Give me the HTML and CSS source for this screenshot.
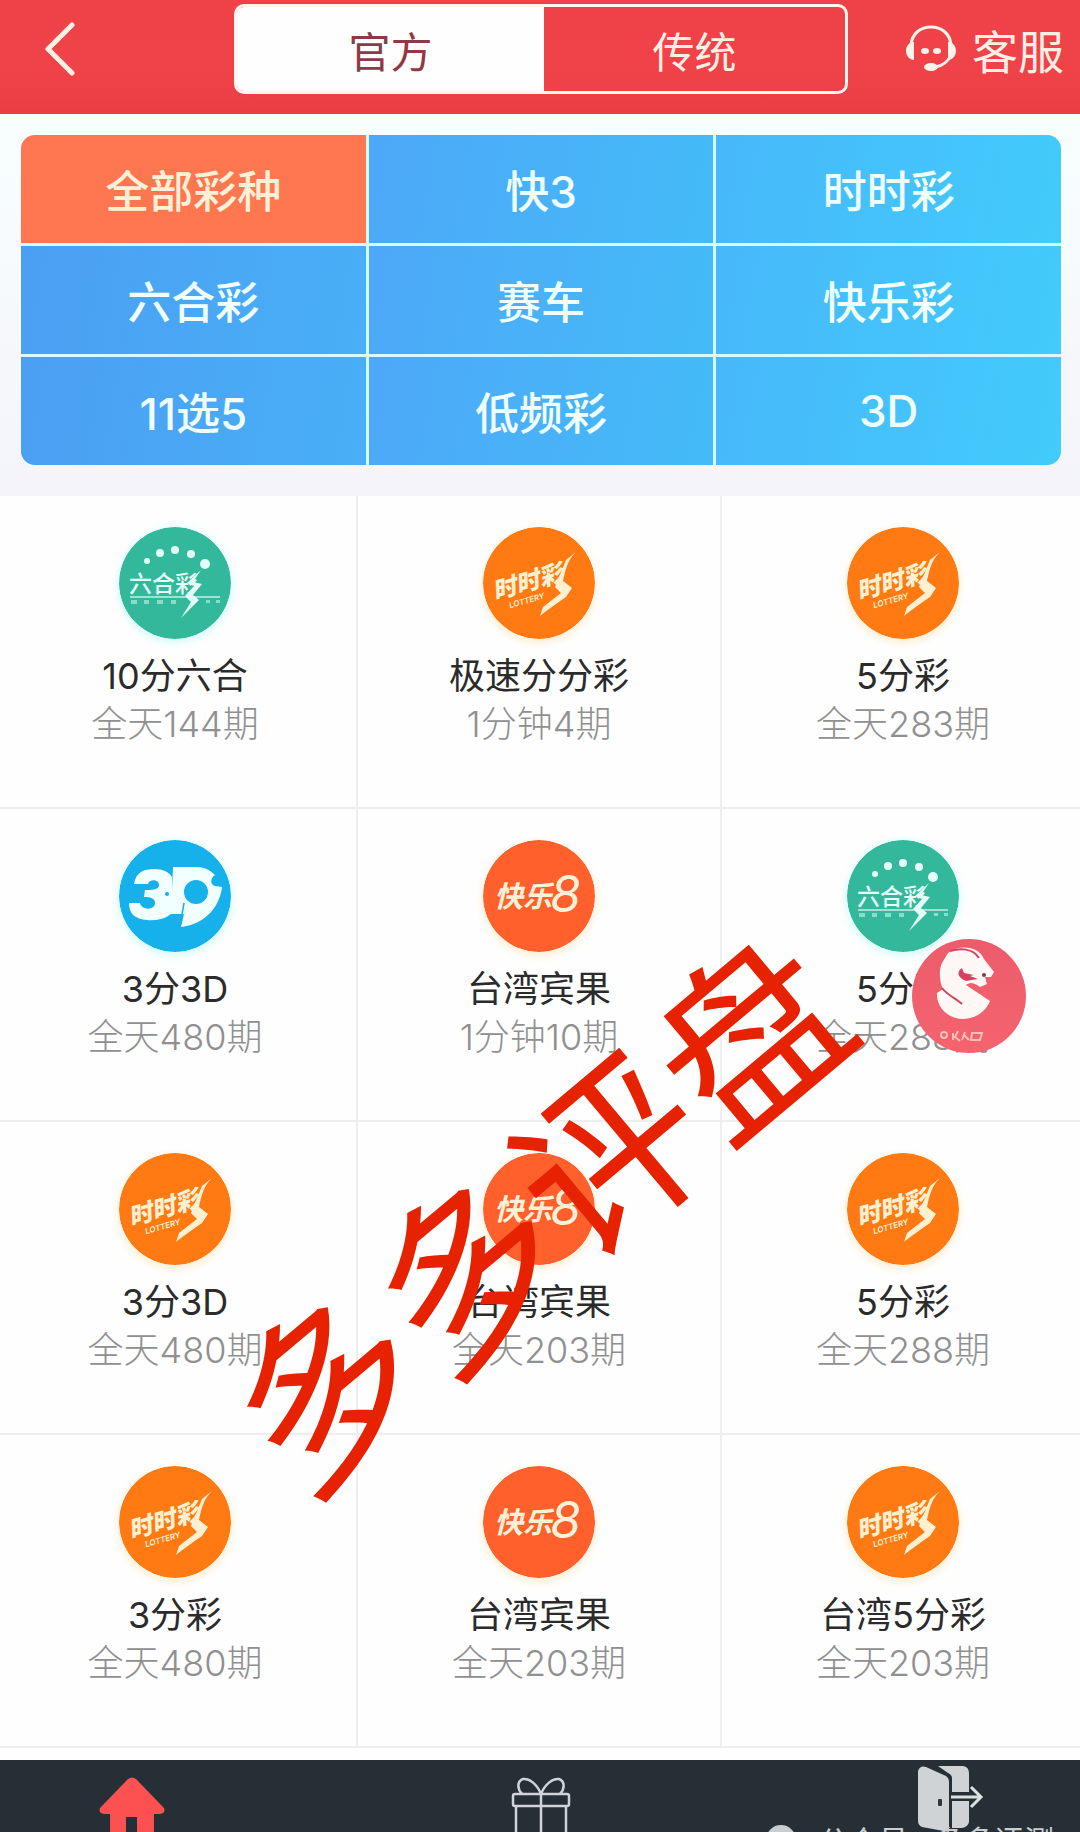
FILE: index.html
```html
<!DOCTYPE html>
<html lang="zh-CN">
<head>
<meta charset="utf-8">
<meta name="viewport" content="width=device-width, initial-scale=1">
<title>全部彩种</title>
<link rel="stylesheet" href="styles.css">
</head>
<body>
<svg class="defs" aria-hidden="true">
  <symbol id="liuhe" viewBox="0 0 112 112">
    <circle cx="56" cy="56" r="56" fill="#34b89c"/>
    <g fill="#e4fff8">
      <circle cx="28" cy="34" r="3"/><circle cx="41" cy="26" r="4"/><circle cx="56" cy="23" r="4"/><circle cx="72" cy="27" r="4"/><circle cx="86" cy="37" r="5"/>
      <text x="10" y="65" font-size="23" font-weight="500">六合彩</text>
      <path d="M82 43 74 55 83 57 74 68 80 73 62 91 72 75 66 69 75 59 68 56Z"/>
      <path d="M11 69H101V71H11Z" opacity=".6"/>
      <path d="M12 73h6v4h-6zM25 73h5v4h-5zM38 73h6v4h-6zM52 73h5v4h-5zM87 73h4v3h-4zM97 73h4v3h-4z" opacity=".5"/>
    </g>
  </symbol>
  <symbol id="shishi" viewBox="0 0 112 112">
    <circle cx="56" cy="56" r="56" fill="#ff7a12"/>
    <g fill="#fff0d2">
      <g transform="rotate(-16 50 56)">
        <text x="9" y="62" font-size="24" font-weight="900" font-style="italic">时时彩</text>
        <text class="latin" x="21" y="74" font-size="8" font-weight="600" font-style="italic">LOTTERY</text>
      </g>
      <path d="M93 25C84 33 82 45 80 54L89 61 83 70C73 77 64 83 57 89L60 80 78 66 72 60 83 33Z"/>
    </g>
  </symbol>
  <symbol id="kuaile" viewBox="0 0 112 112">
    <circle cx="56" cy="56" r="56" fill="#ff602c"/>
    <g fill="#fff0d8">
      <text x="11" y="67" font-size="29" font-weight="700" font-style="italic">快乐</text>
      <text class="latin" x="67" y="72" font-size="50" font-weight="400" font-style="italic">8</text>
    </g>
  </symbol>
  <symbol id="threed" viewBox="0 0 112 112">
    <circle cx="56" cy="56" r="56" fill="#16b1ea"/>
    <path fill="#f2ffff" d="M15 44C17 32 25 29 35 29 44 29 50 32 53 37V73C48 78 39 81 28 80 16 79 10 74 10 63H21C22 70 36 71 36 63 36 58 31 57 25 57L26 50C32 50 40 50 40 45 40 39 30 39 29 44Z"/>
    <path fill="#f2ffff" fill-rule="evenodd" d="M54 27H78C86 27 92 31 96 35 91 38 91 45 96 46L103 47C101 66 87 84 62 87L65 74H52ZM77 40A12 12 0 1 0 77 64 12 12 0 0 0 77 40Z"/>
    <path d="M65 63 61 86" stroke="#16b1ea" stroke-width="1.5"/><circle cx="48" cy="54" r="2" fill="#16b1ea"/>
  </symbol>
</svg>

<header class="topbar">
  <button class="back" aria-label="返回"><svg width="32" height="54" viewBox="0 0 32 54"><path d="M28 3 4 27 28 51" fill="none" stroke="#fff0e2" stroke-width="5" stroke-linecap="round" stroke-linejoin="round"/></svg></button>
  <div class="segment"><button class="active">官方</button><button>传统</button></div>
  <a class="service" href="#"><svg width="50" height="48" viewBox="0 0 50 48"><g fill="none" stroke="#fff3ea" stroke-width="3"><path d="M5 20C6 8 15 2 25 2S44 8 45 20M45 30C42 37 36 41 29 42"/></g><g fill="#fff3ea"><path d="M8 17C3 17 0 21 0 26S4 35 8 35ZM42 17C47 17 50 21 50 26S46 35 42 35Z"/><ellipse cx="25" cy="42" rx="7" ry="4"/><ellipse cx="19" cy="26" rx="4" ry="3"/><ellipse cx="31" cy="26" rx="4" ry="3"/></g></svg><span>客服</span></a>
</header>

<main>
  <nav class="filters">
    <div class="filter-grid">
      <button class="selected">全部彩种</button><button>快3</button><button>时时彩</button>
      <button>六合彩</button><button>赛车</button><button>快乐彩</button>
      <button>11选5</button><button>低频彩</button><button>3D</button>
    </div>
  </nav>
  <section class="games">
    <a class="game" href="#"><svg class="logo teal"><use href="#liuhe"/></svg><strong>10分六合</strong><span>全天144期</span></a>
    <a class="game" href="#"><svg class="logo"><use href="#shishi"/></svg><strong>极速分分彩</strong><span>1分钟4期</span></a>
    <a class="game" href="#"><svg class="logo"><use href="#shishi"/></svg><strong>5分彩</strong><span>全天283期</span></a>
    <a class="game" href="#"><svg class="logo teal"><use href="#threed"/></svg><strong>3分3D</strong><span>全天480期</span></a>
    <a class="game" href="#"><svg class="logo"><use href="#kuaile"/></svg><strong>台湾宾果</strong><span>1分钟10期</span></a>
    <a class="game" href="#"><svg class="logo teal"><use href="#liuhe"/></svg><strong>5分彩</strong><span>全天288期</span></a>
    <a class="game" href="#"><svg class="logo"><use href="#shishi"/></svg><strong>3分3D</strong><span>全天480期</span></a>
    <a class="game" href="#"><svg class="logo"><use href="#kuaile"/></svg><strong>台湾宾果</strong><span>全天203期</span></a>
    <a class="game" href="#"><svg class="logo"><use href="#shishi"/></svg><strong>5分彩</strong><span>全天288期</span></a>
    <a class="game" href="#"><svg class="logo"><use href="#shishi"/></svg><strong>3分彩</strong><span>全天480期</span></a>
    <a class="game" href="#"><svg class="logo"><use href="#kuaile"/></svg><strong>台湾宾果</strong><span>全天203期</span></a>
    <a class="game" href="#"><svg class="logo"><use href="#shishi"/></svg><strong>台湾5分彩</strong><span>全天203期</span></a>
  </section>
</main>

<footer class="tabbar">
  <a href="#" aria-label="首页"><svg width="66" height="60" viewBox="0 0 66 60"><path fill="#fb5150" fill-rule="evenodd" d="M29 2Q33-1 37 2L65 31Q67 36 61 37H55V58Q55 60 50 60H14Q11 60 11 57V37H5Q-1 36 1 31ZM27 40V60H38V40Z"/></svg></a>
  <a href="#" aria-label="礼物"><svg width="60" height="60" viewBox="0 0 60 60"><g fill="none" stroke="#cfd4da" stroke-width="2.5"><rect x="2" y="17" width="56" height="12" rx="2"/><path d="M5 29V57H55V29M30 17V60M30 17C26 7 18 1 12 2 6 4 6 12 11 17M30 17C34 7 42 1 48 2 54 4 54 12 49 17"/></g></svg></a>
  <a class="exit" href="#" aria-label="退出"><svg width="66" height="66" viewBox="0 0 66 66"><g fill="#cfd3d6"><path d="M20 0H45Q51 1 51 7V26H34V12Q34 9 30 7ZM34 35H51V56Q50 61 44 62L34 62Z"/><path d="M0 5Q2-1 8 1L28 10Q31 12 31 16V66L4 61Q0 59 0 55Z"/></g><rect x="20" y="33" width="4" height="7" rx="1" fill="#30383e"/><path d="M33 31H62M53 21 63 31 53 41" fill="none" stroke="#dce1e3" stroke-width="3"/></svg></a>
</footer>

<button class="float" aria-label="龙"><svg width="114" height="114" viewBox="0 0 114 114"><path fill="#fff8f4" d="M36 14C46 6 66 6 72 20L82 33 79 38 73 38 75 45 68 48C60 42 57 44 54 46L78 62C74 72 64 80 50 80 34 79 24 66 25 54L31 50C27 42 27 30 30 24Z"/><path fill="#d94062" d="M50 29C44 33 46 39 54 42L66 40 58 37 62 36 52 34Z"/><path d="M30 49C36 57 44 59 50 65M38 12C48 9 61 9 67 19" fill="none" stroke="#d94062" stroke-width="2"/><circle cx="72" cy="36" r="2" fill="#80394d"/><g fill="none" stroke="#ffd6cb" stroke-width="2" opacity=".8"><circle cx="32" cy="96" r="3"/><path d="M41 94V101M46 92 43 98 48 102M53 93 50 101M52 96 57 101M60 94H70L68 101H59Z"/></g></svg></button>
<div class="watermark">多多评盘</div>
<div class="account"><i></i><span>公众号 · 多多评测</span></div>
</body>
</html>
```
FILE: styles.css
```css
* { box-sizing: border-box; }
body {
  position: relative;
  margin: 0;
  overflow: hidden;
  background: #fefefe;
  font-family: Inter, "Noto Sans CJK SC", sans-serif;
}
button { padding: 0; border: 0; background: none; color: inherit; font: inherit; }
a { color: inherit; text-decoration: none; }
svg { display: block; }
svg text { font-family: "Noto Sans CJK SC", sans-serif; }
svg .latin { font-family: Inter, sans-serif; }
.defs { position: absolute; width: 0; height: 0; }

.topbar {
  display: grid;
  grid-template-columns: 1fr 614px 1fr;
  align-items: center;
  height: 114px;
  padding: 0 16px 16px 18px;
  background: linear-gradient(#ee4148, #f04349 60%, #e93d44);
  color: #fff0e6;
}
.back { justify-self: start; padding: 0 26px; }
.segment {
  display: flex;
  height: 90px;
  overflow: hidden;
  border: 3px solid #fff6f2;
  border-radius: 10px;
  font-size: 42px;
}
.segment button { flex: 1; border-left: 3px solid #fffefe; }
.segment .active { background: #fffefe; color: #8c3a45; }
.service {
  display: flex;
  justify-self: end;
  align-items: center;
  gap: 16px;
  font-size: 46px;
}

.filters { padding: 21px 19px 31px 21px; background: linear-gradient(#f8fefe, #f4f4fa); }
.filter-grid {
  display: grid;
  grid-template-columns: repeat(3, 1fr);
  grid-auto-rows: 108px;
  gap: 3px;
  overflow: hidden;
  border-radius: 14px;
  background: #d5fbff;
  color: #f0ffff;
  font-size: 44px;
  font-weight: 500;
}
.filter-grid button { background: linear-gradient(100deg, #4b9ff2, #49aff7); }
.filter-grid button:nth-child(3n+2) { background: linear-gradient(100deg, #4da8f8, #44bbf8); }
.filter-grid button:nth-child(3n) { background: linear-gradient(100deg, #47b8fa, #42cbfb); }
.filter-grid .selected { background: #ff7751; color: #fff0d8; }

.games {
  display: grid;
  grid-template-columns: repeat(3, 1fr);
  grid-auto-rows: 313px;
  margin: 0 -4px 0 -8px;
  padding-bottom: 12px;
}
.game {
  display: flex;
  flex-direction: column;
  align-items: center;
  padding-top: 31px;
  border-bottom: 2px solid #eeeeee;
  border-left: 2px solid #eeeeee;
  font-size: 36px;
  line-height: 48px;
}
.logo {
  width: 112px;
  height: 112px;
  margin-bottom: 13px;
  border-radius: 50%;
  box-shadow: 0 3px 10px #fbeccb;
}
.logo.teal { box-shadow: 0 2px 10px #c4fbf8; }
.game strong { color: #2b2b2b; font-weight: 400; }
.game span { color: #909090; font-weight: 300; }

.tabbar {
  display: grid;
  grid-template-columns: repeat(3, 1fr);
  justify-items: center;
  height: 73px;
  margin: 0 -8px 0 -6px;
  padding: 17px 0 0;
  overflow: hidden;
  background: #262f35;
}
.tabbar a { height: 56px; padding: 0 88px 0 0; }
.tabbar a:nth-child(2) { padding: 0; }
.tabbar .exit { margin-top: -11px; padding: 0 0 0 90px; }

.float {
  position: absolute;
  top: 939px;
  right: 54px;
  border-radius: 50%;
  background: linear-gradient(#ec5c6a, #f5636f);
}
.watermark {
  position: absolute;
  top: 1206px;
  left: 50%;
  margin-left: -8px;
  color: #e62200;
  font: 400 184px/1 "Noto Sans CJK SC", sans-serif;
  white-space: nowrap;
  transform: translate(-50%, -50%) rotate(-40deg);
}
.account {
  position: absolute;
  right: 26px;
  bottom: 0;
  display: flex;
  gap: 22px;
  height: 8px;
  overflow: hidden;
  color: #c9cdd0;
  font-size: 30px;
  line-height: 32px;
}
.account i { width: 30px; height: 30px; border-radius: 50%; background: #c9cdd0; }
```
